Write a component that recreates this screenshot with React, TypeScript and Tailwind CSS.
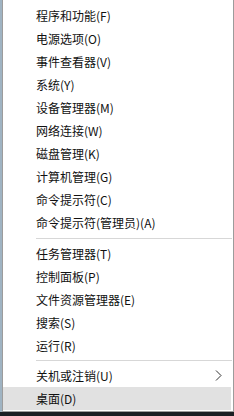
import type { ReactNode } from "react";

const groups: string[][] = [
  [
    "程序和功能(F)",
    "电源选项(O)",
    "事件查看器(V)",
    "系统(Y)",
    "设备管理器(M)",
    "网络连接(W)",
    "磁盘管理(K)",
    "计算机管理(G)",
    "命令提示符(C)",
    "命令提示符(管理员)(A)",
  ],
  ["任务管理器(T)", "控制面板(P)", "文件资源管理器(E)", "搜索(S)", "运行(R)"],
];

function Row({
  children,
  active,
  right,
}: {
  children: ReactNode;
  active?: boolean;
  right?: ReactNode;
}) {
  return (
    <div
      className={
        active
          ? "mr-[2px] flex h-[23px] items-center bg-[#e1e1e1] pl-[33px]"
          : "mr-[2px] flex h-[23px] items-center pl-[33px]"
      }
    >
      <span className="flex-1 leading-none">{children}</span>
      {right}
    </div>
  );
}

export default function App() {
  return (
    <div
      className="flex h-[416px] w-[234px] flex-col bg-[#1b1f24] text-[12px] text-[#111]"
      style={{ fontFamily: '"Noto Sans CJK SC", "Noto Sans", sans-serif' }}
    >
      <div className="flex">
        {/* desktop strip at the left */}
        <div className="w-[2px] bg-[#9fb3c2]" />
        <div className="w-[232px] border-b border-l border-r border-[#9c9c9c] bg-white pb-[1px] pt-[4px]">
          {groups[0].map((t) => (
            <Row key={t}>{t}</Row>
          ))}
          <div className="flex h-[8px] items-center">
            <div className="ml-[33px] mr-[1px] h-px flex-1 bg-[#d7d7d7]" />
          </div>
          {groups[1].map((t) => (
            <Row key={t}>{t}</Row>
          ))}
          <div className="flex h-[7px] items-center">
            <div className="ml-[33px] mr-[1px] h-px flex-1 bg-[#d7d7d7]" />
          </div>
          <Row
            right={
              <svg
                width="7"
                height="11"
                viewBox="0 0 7 11"
                className="mr-[9px]"
                fill="none"
                stroke="#333"
                strokeWidth="1"
              >
                <path d="M1 0.5 L6 5.5 L1 10.5" />
              </svg>
            }
          >
            关机或注销(U)
          </Row>
          <Row active>桌面(D)</Row>
        </div>
      </div>
    </div>
  );
}
